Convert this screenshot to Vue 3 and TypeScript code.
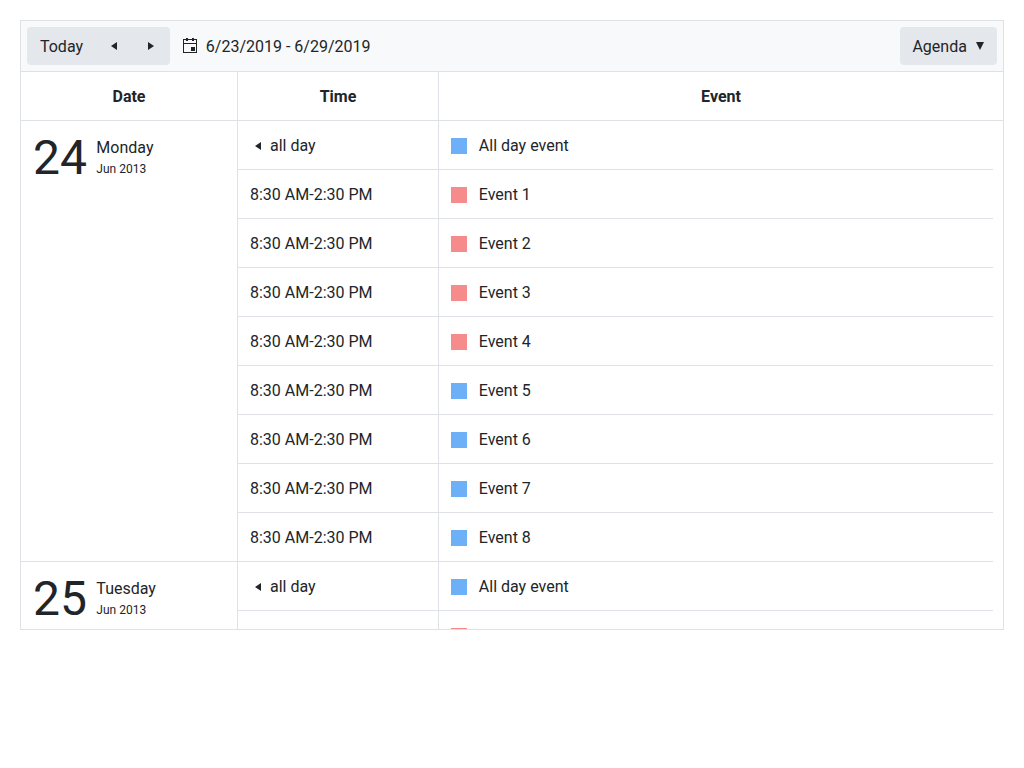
<script setup lang="ts">
interface Entry {
  time: string
  title: string
  kind: 'blue' | 'red'
}
interface Day {
  day: number
  weekday: string
  month: string
  entries: Entry[]
}

const hours = '8:30 AM-2:30 PM'

function makeDay(day: number, weekday: string, count: number): Day {
  const entries: Entry[] = [{ time: '', title: 'All day event', kind: 'blue' }]
  for (let i = 1; i <= count; i++) {
    entries.push({ time: hours, title: `Event ${i}`, kind: i <= 4 ? 'red' : 'blue' })
  }
  return { day, weekday, month: 'Jun 2013', entries }
}

const days: Day[] = [makeDay(24, 'Monday', 8), makeDay(25, 'Tuesday', 1)]
</script>

<template>
  <div class="scheduler">
    <header class="toolbar">
      <div class="nav">
        <button class="today">Today</button>
        <button class="arrow" aria-label="Previous">
          <svg width="6" height="8" viewBox="0 0 6 8"><path d="M6 0v8L0 4z" /></svg>
        </button>
        <button class="arrow" aria-label="Next">
          <svg width="6" height="8" viewBox="0 0 6 8"><path d="M0 0v8l6-4z" /></svg>
        </button>
      </div>
      <svg class="calendar" width="14" height="16" viewBox="0 0 14 16">
        <path d="M0 1h14v14H0zM1 2v12h12V2z" fill-rule="evenodd" />
        <path d="M1 5h12v1H1zM3 0h2v3H3zM9 0h2v3H9zM8 9h4v4H8z" />
      </svg>
      <span class="range">6/23/2019 - 6/29/2019</span>
      <button class="view">
        <span>Agenda</span>
        <svg width="8" height="8" viewBox="0 0 8 8"><path d="M0 0h8L4 8z" /></svg>
      </button>
    </header>
    <div class="head">
      <div>Date</div>
      <div>Time</div>
      <div>Event</div>
    </div>
    <div class="body">
      <section v-for="d in days" :key="d.day" class="day">
        <div class="date">
          <span class="number">{{ d.day }}</span>
          <div class="labels">
            <div class="weekday">{{ d.weekday }}</div>
            <div class="month">{{ d.month }}</div>
          </div>
        </div>
        <div class="entries">
          <div v-for="e in d.entries" :key="e.title" class="entry">
            <div class="time">
              <template v-if="e.time">{{ e.time }}</template>
              <template v-else>
                <svg class="marker" width="6" height="8" viewBox="0 0 6 8"><path d="M6 0v8L0 4z" /></svg>
                <span>all day</span>
              </template>
            </div>
            <div class="event">
              <i class="swatch" :class="e.kind"></i>
              <span>{{ e.title }}</span>
            </div>
          </div>
        </div>
      </section>
    </div>
  </div>
</template>

<style scoped>
.scheduler {
  box-sizing: border-box;
  width: 984px;
  height: 610px;
  margin: 20px;
  border: 1px solid #dee2e6;
  display: flex;
  flex-direction: column;
  font: 16px/24px Roboto, sans-serif;
  color: #212529;
  background: #fff;
  overflow: hidden;
}
svg {
  display: block;
  fill: #212529;
  flex: none;
}
button {
  font: inherit;
  color: inherit;
  border: 0;
  margin: 0;
  padding: 0;
  background: transparent;
}
.toolbar {
  box-sizing: border-box;
  height: 51px;
  flex: none;
  padding: 0 6px;
  display: flex;
  align-items: center;
  background: #f8f9fa;
  border-bottom: 1px solid #dee2e6;
}
.nav,
.view {
  display: flex;
  align-items: center;
  height: 38px;
  border-radius: 4px;
  background: #e4e7eb;
}
.nav {
  width: 143px;
}
.today {
  width: 69px;
  padding-top: 2px;
}
.arrow {
  box-sizing: border-box;
  width: 37px;
  height: 38px;
  padding-right: 2px;
  display: flex;
  align-items: center;
  justify-content: center;
}
.calendar {
  margin-left: 13px;
}
.range {
  margin-left: 8.8px;
  padding-top: 2px;
}
.view {
  box-sizing: border-box;
  margin-left: auto;
  width: 97px;
  padding-left: 12.4px;
  gap: 9.1px;
}
.view span {
  padding-top: 2px;
}
.head {
  display: grid;
  grid-template-columns: 216px 201px 1fr;
  flex: none;
  box-sizing: border-box;
  height: 49px;
  border-bottom: 1px solid #dee2e6;
  font-weight: 700;
  text-align: center;
  line-height: 50px;
}
.head > div {
  height: 48px;
}
.head > div + div {
  border-left: 1px solid #dee2e6;
}
.body {
  flex: 1;
  min-height: 0;
  overflow: hidden;
  padding-right: 10px;
}
.day {
  display: flex;
}
.date {
  box-sizing: border-box;
  width: 217px;
  border-right: 1px solid #dee2e6;
  border-bottom: 1px solid #dee2e6;
  padding: 12px;
  display: flex;
  align-items: flex-start;
}
.number {
  font-size: 48px;
  line-height: 50px;
}
.labels {
  margin-left: 9.4px;
  padding-top: 3px;
}
.month {
  font-size: 12px;
  line-height: 18px;
}
.entries {
  flex: 1;
}
.entry {
  box-sizing: border-box;
  height: 49px;
  display: flex;
  border-bottom: 1px solid #dee2e6;
}
.time {
  box-sizing: border-box;
  width: 201px;
  padding: 2px 0 0 12px;
  display: flex;
  align-items: center;
  border-right: 1px solid #dee2e6;
}
.marker {
  margin: 0 9px 0 5px;
}
.event {
  display: flex;
  align-items: center;
  padding: 2px 0 0 12px;
  gap: 11.8px;
}
.swatch {
  width: 16px;
  height: 16px;
}
.blue {
  background: #6db0f8;
}
.red {
  background: #f58b8b;
}
</style>
